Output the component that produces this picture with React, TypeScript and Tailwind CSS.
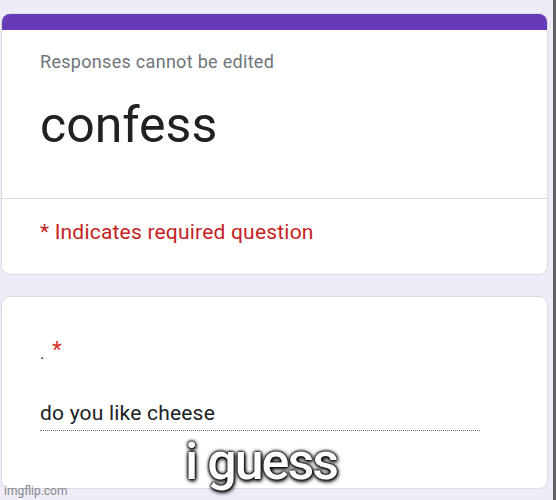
export default function App() {
  return (
    <div
      className="relative h-[500px] w-[556px] overflow-hidden bg-[#f0ebf8]"
      style={{ fontFamily: "Roboto, 'Noto Sans', sans-serif" }}
    >
      <div className="flex flex-col gap-[21px] pl-[1px] pt-[13px]">
        {/* Header card */}
        <div className="w-[547px] overflow-hidden rounded-[9px] border border-[#dadce0] bg-white">
          <div className="h-[16px] bg-[#673ab7]" />
          <div className="px-[38px] pb-[44px] pt-[20px]">
            <div className="text-[18px] leading-[24px] tracking-[0.3px] text-[#70757a]">Responses cannot be edited</div>
            <div className="mt-[23px] text-[50px] leading-[57px] text-[#202124]">confess</div>
          </div>
          <div className="border-t border-[#dadce0] px-[38px] pb-[28px] pt-[19px]">
            <div className="text-[21px] leading-[28px] tracking-[0.2px] text-[#c5221f]">* Indicates required question</div>
          </div>
        </div>

        {/* Question card */}
        <div className="h-[193px] w-[547px] rounded-[9px] border border-[#dadce0] bg-white px-[38px] pt-[44px]">
          <div className="flex items-start text-[16px] leading-[24px] text-[#202124]">
            <span className="mt-[1px]">.</span>
            <span className="ml-[8px] mt-[-3px] text-[22px] leading-[24px] text-[#d93025]">*</span>
          </div>
          <div className="mt-[33px] w-[440px] border-b border-dotted border-[#70757a] pb-[3px] text-[21px] leading-[28px] tracking-[0.2px] text-[#202124]">
            do you like cheese
          </div>
        </div>
      </div>

      {/* screenshot edge */}
      <div className="absolute right-0 top-0 h-full w-[3px] bg-[#5f6368]" />

      {/* meme caption */}
      <div
        className="absolute left-[185px] top-[432px] text-[52px] font-medium leading-[60px] tracking-[-2px] text-white"
        style={{ textShadow: "0 0 2px #000, 0 0 3px #000, 0 0 4px #000, 1px 2px 4px #000" }}
      >
        i guess
      </div>

      <div className="absolute left-[4px] top-[483px] text-[12px] leading-[16px] text-[#8a8a8a]">imgflip.com</div>
    </div>
  );
}
